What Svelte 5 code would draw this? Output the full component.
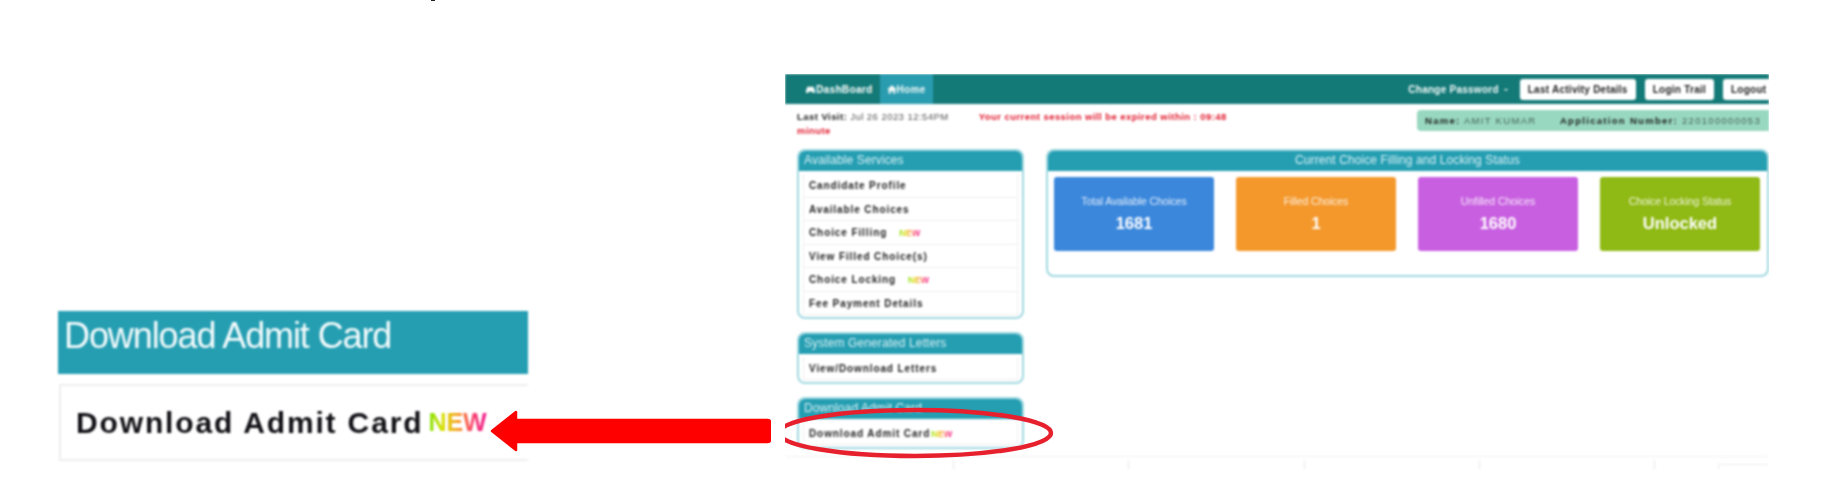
<script lang="ts">
  const services = [
    { label: "Candidate Profile" },
    { label: "Available Choices" },
    { label: "Choice Filling", isNew: true },
    { label: "View Filled Choice(s)" },
    { label: "Choice Locking", isNew: true },
    { label: "Fee Payment Details" },
  ];

  const cards = [
    { title: "Total Available Choices", value: "1681", color: "#3a87dc" },
    { title: "Filled Choices", value: "1", color: "#f4982c" },
    { title: "Unfilled Choices", value: "1680", color: "#c85fe0" },
    { title: "Choice Locking Status", value: "Unlocked", color: "#8fb914" },
  ];
</script>

<div class="slide">
  <span class="stray"></span>

  <section class="crop">
    <div class="crop-head">Download Admit Card</div>
    <div class="crop-row">Download Admit Card<span class="new big">NEW</span></div>
  </section>

  <section class="shot">
    <div class="shot-inner">
      <nav class="nav">
        <div class="nav-left">
          <a class="tab" href="#top">
            <svg viewBox="0 0 12 10" width="11" height="9"><path d="M1 9V6l1.500-4h7L11 6v3H8.500V7.500h-5V9z" fill="currentColor" /></svg>DashBoard
          </a>
          <a class="tab active" href="#top">
            <svg viewBox="0 0 12 10" width="10" height="9"><path d="M6 0l6 5h-2v5H7.500V7h-3v3H2V5H0z" fill="currentColor" /></svg>Home
          </a>
        </div>
        <div class="nav-right">
          <span class="change">Change Password <i class="caret"></i></span>
          <button>Last Activity Details</button>
          <button>Login Trail</button>
          <button class="logout">Logout</button>
        </div>
      </nav>

      <div class="status">
        <div class="visit">
          <div class="visit-line">
            <span><b>Last Visit:</b> Jul 26 2023 12:54PM</span>
            <span class="expire">Your current session will be expired within : 09:48</span>
          </div>
          <span class="expire">minute</span>
        </div>
        <div class="info">
          <span><b>Name:</b> AMIT KUMAR</span>
          <span><b>Application Number:</b> 220100000053</span>
        </div>
      </div>

      <div class="main">
        <aside class="side">
          <div class="panel">
            <h3>Available Services</h3>
            <ul>
              {#each services as s}
                <li>{s.label}{#if s.isNew}<span class="new small spaced">NEW</span>{/if}</li>
              {/each}
            </ul>
          </div>
          <div class="panel">
            <h3>System Generated Letters</h3>
            <ul><li>View/Download Letters</li></ul>
          </div>
          <div class="panel">
            <h3>Download Admit Card</h3>
            <ul><li>Download Admit Card<span class="new small">NEW</span></li></ul>
          </div>
        </aside>

        <div class="panel status-panel">
          <h3>Current Choice Filling and Locking Status</h3>
          <div class="cards">
            {#each cards as c}
              <div class="card" style="background: {c.color}">
                <span class="card-title">{c.title}</span>
                <strong>{c.value}</strong>
              </div>
            {/each}
          </div>
        </div>
      </div>

      <div class="foot">
        <span></span><span></span><span></span><span></span>
        <span class="last"><i></i></span>
      </div>
    </div>

    <svg class="ring" viewBox="0 0 290 60" width="290" height="60">
      <ellipse cx="130" cy="30" rx="136" ry="23" fill="none" stroke="#e6202c" stroke-width="4.500" />
    </svg>
  </section>

  <svg class="arrow" viewBox="0 0 282 42" width="282" height="42">
    <path d="M3 21L27 2v8h252a2 2 0 0 1 2 2v18a2 2 0 0 1-2 2H27v8z" fill="#fe0000" stroke="#fe0000" stroke-width="2.500" stroke-linejoin="round" />
  </svg>
</div>

<style>
  :global(body) {
    margin: 0;
    background: #fff;
  }
  .slide {
    position: relative;
    display: flex;
    align-items: flex-start;
    width: 1842px;
    height: 504px;
    overflow: hidden;
    font-family: "Liberation Sans", Arial, sans-serif;
  }
  .stray {
    position: absolute;
    left: 431px;
    top: 0;
    width: 4px;
    height: 1px;
    background: #222;
  }

  /* enlarged crop on the left */
  .crop {
    width: 470px;
    margin: 311px 0 0 58px;
    filter: blur(0.8px);
  }
  .crop-head {
    height: 63px;
    padding: 5px 0 0 6px;
    box-sizing: border-box;
    background: #259eb2;
    color: #f4fbfc;
    font-size: 36px;
    line-height: 40px;
    letter-spacing: -1.1px;
  }
  .crop-row {
    display: flex;
    align-items: center;
    height: 77px;
    margin: 10px 0 0 1px;
    padding-left: 15px;
    box-sizing: border-box;
    border: 2px solid #eeeeee;
    border-right: 0;
    color: #111116;
    font-size: 30px;
    font-weight: 700;
    letter-spacing: 1.85px;
  }
  .new {
    background: linear-gradient(90deg, #7be000 0%, #d8e000 25%, #f7a020 50%, #f8406a 75%, #f01a90 100%);
    -webkit-background-clip: text;
    background-clip: text;
    color: transparent;
    font-weight: 700;
    letter-spacing: 0;
  }
  .big {
    margin-left: 5px;
    font-size: 25px;
    letter-spacing: 0;
  }
  .small {
    font-size: 9px;
    margin-left: 1px;
  }
  .spaced {
    margin-left: 12px;
  }

  /* portal screenshot on the right */
  .shot {
    position: relative;
    width: 984px;
    margin: 74px 0 0 257px;
    overflow: hidden;
  }
  .shot-inner {
    filter: blur(0.8px);
  }
  .nav {
    display: flex;
    justify-content: space-between;
    height: 30px;
    background: #147a78;
    color: #f0f8f7;
    font-size: 10px;
    font-weight: 700;
  }
  .nav-left {
    display: flex;
    padding-left: 20px;
  }
  .tab {
    display: flex;
    align-items: center;
    gap: 0;
    padding: 0 7px 0 0;
    color: inherit;
    text-decoration: none;
    letter-spacing: 0.35px;
  }
  .tab.active {
    padding: 0 7px;
    background: #2a9cb0;
  }
  .nav-right {
    display: flex;
    align-items: center;
    gap: 9px;
  }
  .change {
    margin-right: 3px;
    letter-spacing: 0.25px;
  }
  .caret {
    display: inline-block;
    margin-left: 2px;
    vertical-align: 2px;
    border: 2.500px solid transparent;
    border-top-color: currentColor;
    border-bottom: 0;
  }
  button {
    height: 21px;
    padding: 0 8px;
    border: 0;
    border-radius: 3px;
    background: #fff;
    color: #222;
    font: 700 10px "Liberation Sans", Arial, sans-serif;
    letter-spacing: 0.25px;
  }
  .logout {
    width: 46px;
    padding: 0 0 0 8px;
    text-align: left;
    border-radius: 3px 0 0 3px;
  }
  .status {
    display: flex;
    justify-content: space-between;
    align-items: flex-start;
    height: 45px;
    padding-left: 12px;
  }
  .visit {
    margin-top: 6px;
    color: #555;
    font-size: 9.5px;
    line-height: 14px;
    letter-spacing: 0.45px;
  }
  .visit-line {
    display: flex;
    gap: 30px;
  }
  .visit b {
    color: #222;
  }
  .expire {
    color: #e0182c;
    font-weight: 700;
  }
  .info {
    display: flex;
    justify-content: space-between;
    align-items: center;
    box-sizing: border-box;
    width: 352px;
    height: 21px;
    margin-top: 6px;
    padding: 0 8px;
    border-radius: 4px 0 0 4px;
    background: #98d8c0;
    color: #46625a;
    font-size: 9.5px;
    letter-spacing: 1.3px;
  }
  .info b {
    color: #1e1e1e;
  }
  .main {
    display: flex;
    gap: 22px;
    padding-left: 12px;
  }
  .side {
    display: flex;
    flex-direction: column;
    gap: 12.5px;
    flex: 0 0 227px;
  }
  .panel {
    box-sizing: border-box;
    border: 2px solid #a0d8e0;
    border-radius: 8px;
    overflow: hidden;
    background: #fff;
  }
  .panel h3 {
    margin: -2px -2px 0;
    height: 22px;
    padding-left: 7px;
    background: #259eb2;
    color: #d8f0f4;
    font-size: 12px;
    font-weight: 400;
    line-height: 22px;
    letter-spacing: 0.1px;
  }
  ul {
    list-style: none;
    margin: 0;
    padding: 3px 4px 2px;
  }
  li {
    box-sizing: border-box;
    height: 23.5px;
    padding-left: 5px;
    border: 1px solid #eeeeee;
    border-width: 0 1px 1.500px;
    color: #222;
    font-size: 10px;
    font-weight: 700;
    line-height: 23.5px;
    letter-spacing: 0.9px;
  }
  .status-panel {
    flex: 1;
    height: 128px;
  }
  .status-panel h3 {
    padding: 0;
    text-align: center;
  }
  .cards {
    display: flex;
    gap: 22px;
    padding: 6px 7px 6px 6px;
  }
  .card {
    display: flex;
    flex: 1;
    flex-direction: column;
    align-items: center;
    gap: 7px;
    box-sizing: border-box;
    height: 74px;
    padding-top: 18px;
    border-radius: 3px;
    color: #fff;
  }
  .card-title {
    font-size: 10.5px;
    line-height: 12px;
    opacity: 0.85;
    letter-spacing: -0.1px;
  }
  .card strong {
    font-size: 16.5px;
    line-height: 18px;
  }
  .foot {
    display: flex;
    height: 13px;
    margin-top: 7px;
    padding-left: 168px;
    border-top: 1.500px solid #f2f2f2;
  }
  .foot span {
    box-sizing: border-box;
    width: 175.500px;
    height: 9px;
    margin-top: 3px;
    border-left: 1.500px solid #e8e8e8;
  }
  .foot .last {
    display: flex;
    width: 115px;
    padding: 4px 0 0 63px;
  }
  .foot .last i {
    flex: 1;
    border: 1.500px solid #eee;
    border-width: 1.500px 0 0 1.500px;
  }

  /* markup drawn over the pictures */
  .ring {
    position: absolute;
    left: 0;
    top: 329px;
  }
  .arrow {
    position: absolute;
    left: 489px;
    top: 410px;
  }
</style>
